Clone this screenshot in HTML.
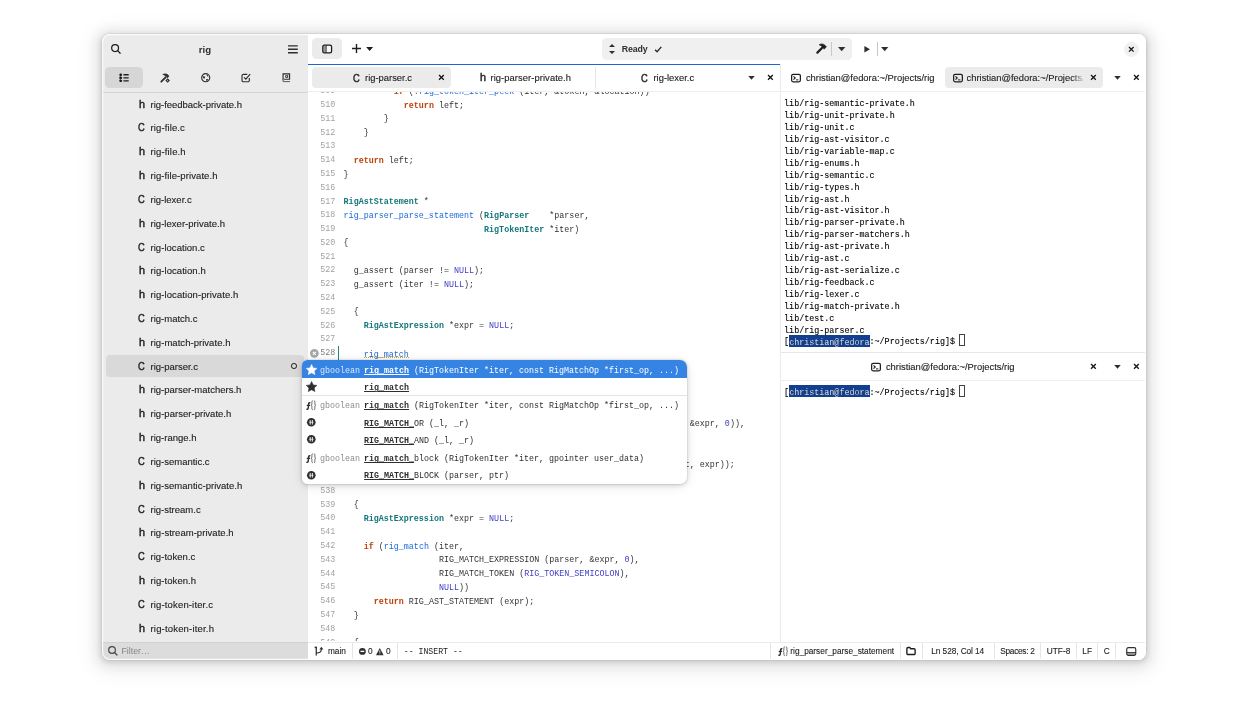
<!DOCTYPE html>
<html lang="en">
<head>
<meta charset="utf-8">
<title>rig - Builder</title>
<style>
html,body{margin:0;padding:0;background:#fff;}
body{width:1248px;height:702px;overflow:hidden;position:relative;font-family:"Liberation Sans",sans-serif;color:#2e2e2e;font-size:9.4px;}
svg{display:block;overflow:visible}
i{font-style:normal}
u{text-decoration:none}
#win{will-change:transform;position:absolute;left:102px;top:34px;width:1044px;height:626px;border-radius:8px;background:#fff;overflow:hidden;
 box-shadow:0 0 0 0.7px rgba(0,0,0,.07),0 1.3px 5px 1.3px rgba(0,0,0,.11),0 2px 13px 6.6px rgba(0,0,0,.08),0 4px 21px 10.6px rgba(0,0,0,.04);}
#win::after{content:"";position:absolute;left:0;top:0;right:0;bottom:0;border-radius:8px;box-shadow:inset 0 0 0 1.2px rgba(255,255,255,.85);pointer-events:none;z-index:50}
.ic{position:absolute}
.ic2{width:10.6px;height:10.6px}
/* sidebar */
#side{position:absolute;left:0;top:0;width:206.9px;height:626px;background:#ebebeb;box-shadow:inset -1px 0 0 #e2e2e2}
#title{position:absolute;left:0;width:206px;top:9.7px;text-align:center;font-weight:bold;font-size:9.6px;line-height:12px;}
#sw{position:absolute;left:3.3px;top:33.2px;width:200.4px;height:21px;display:flex;justify-content:space-between}
.sb{width:37.4px;height:21.2px;border-radius:4.5px;display:flex;align-items:center;justify-content:center}
.sb svg{margin-top:0.6px}
.sb.sel{background:#d6d6d6}
#files{position:absolute;left:0;top:57.6px;width:206.3px;height:549.9px;border-top:1px solid #d4d4d4;overflow:hidden;box-sizing:border-box}
.fr{position:absolute;left:4px;width:198.3px;height:21.6px;border-radius:4px;line-height:21.6px;}
.fr.sel{background:#d9d9d9}
.fr span{position:absolute;left:44.5px;top:0.2px;color:#222;-webkit-text-stroke:0.12px #222;white-space:nowrap;font-size:9.5px}
.fi{position:absolute;font-weight:normal;font-size:10.6px;left:31.5px;top:0.2px;-webkit-text-stroke:0.4px #1e1e1e;color:#1e1e1e;transform-origin:0 50%}
.fc{transform:scaleX(.88)}
.fh{-webkit-text-stroke:0.4px #1e1e1e;font-size:10.2px;transform:scaleX(1.06);margin-left:1px}
.mod{position:absolute;left:185px;top:7.5px;width:3.6px;height:3.6px;border:1.35px solid #161616;border-radius:50%}
#filter{position:absolute;left:0;top:607.5px;width:206.3px;height:18.5px;background:#dcdcdc;box-shadow:inset 0 1px 0 #d2d2d2}
#filter span{position:absolute;left:19.5px;top:0;line-height:19px;color:#868686;font-size:8.8px}
/* header */
#head{position:absolute;left:206.3px;top:0;width:837.7px;height:30px;background:#fff}
.tbtn{position:absolute;left:4px;top:4.3px;width:29.6px;height:21.2px;border-radius:4.5px;background:#ebebeb;display:flex;align-items:center;justify-content:center}
#omni{position:absolute;left:293.9px;top:4.2px;width:250px;height:21.5px;border-radius:4.5px;background:#f0f0f0}
#omni b{position:absolute;left:19.6px;top:1px;line-height:21.5px;font-size:8.8px;letter-spacing:-0.15px}
.vsep{position:absolute;top:3.8px;width:0.8px;height:13.6px;background:#c8c8c8}
#wclose{position:absolute;left:815.8px;top:7.8px;width:14.8px;height:14.8px;border-radius:50%;background:#f0f0f0;display:flex;align-items:center;justify-content:center}
#wclose svg{width:6.6px;height:6.6px}
/* editor */
#ed{position:absolute;left:206.3px;top:30px;width:471.7px;height:577.5px;background:#fff;overflow:hidden}
#focus{position:absolute;left:0;top:-0.1px;width:100%;height:1.4px;background:#1b66d6}
.tabs{position:absolute;left:0;top:0;width:100%;height:57.6px;height:27.6px;top:30px;top:0;border-bottom:1px solid #e6e6e6;margin-top:0}
#ed .tabs,#right .tabs{top:0;height:27.3px;border-bottom-color:#eeeeee}
.tab{position:absolute;top:3.3px;height:20.7px;border-radius:4px;line-height:20.7px;white-space:nowrap}
.tab.sel{background:#ebebeb}
.tab span{position:absolute;top:0.5px;font-size:9.4px;color:#222;-webkit-text-stroke:0.12px #222}
.tab .fi{top:0.4px}
.tab i{position:absolute;top:6.6px;margin-left:0.4px}
.x{width:6.8px;height:6.8px}
.dd{width:7px;height:3.7px;margin-left:0.8px}
.tbi{position:absolute;top:10.2px}
.tbi .dd{margin-top:1.8px}
.tsep{position:absolute;top:3.3px;width:1px;height:21px;background:#e6e6e6}
.ti{position:absolute;top:5.5px;width:10px;height:10px}
.fade{overflow:hidden;-webkit-mask-image:linear-gradient(to right,#000 90%,transparent 102%);mask-image:linear-gradient(to right,#000 90%,transparent 102%)}
#cv{position:absolute;left:0;top:27.8px;width:100%;height:549.7px;overflow:hidden}
#code{position:absolute;left:-2px;top:-5.95px;width:100%;font-family:"Liberation Mono",monospace;font-size:8.37px;line-height:13.79px;color:#333}
#code div{white-space:pre;height:13.79px;padding-left:37.3px;position:relative}
#code u{position:absolute;left:0;top:-0.6px;width:29px;text-align:right;color:#a3a3a3}
#code .cur u{color:#808080}
.dn{position:relative;top:1px}
.k{color:#be4208}
.t{color:#14767a}
.f{color:#1c69d6}
.n{color:#4141c4}
.ul2{position:absolute;left:57.4px;width:45.2px;top:9.2px;border-top:1px dotted #e5a50a}
#caret{position:absolute;left:29.8px;top:282px;width:1px;height:14.3px;background:#1a8a7a}
/* popup */
#pop{position:absolute;left:200.4px;top:326.2px;width:385px;height:124.2px;background:#fff;border-radius:5.5px 7px 7px 5.5px;overflow:hidden;
 box-shadow:0 0 0 0.7px rgba(0,0,0,.06),0 1px 4px rgba(0,0,0,.16),0 2px 12px rgba(0,0,0,.1);font-family:"Liberation Mono",monospace;font-size:8.33px;color:#2e2e2e}
.pr{position:absolute;left:0;width:100%;height:17.6px;line-height:22.2px;white-space:pre}
.psep{position:absolute;left:0;top:35.2px;width:100%;height:1px;background:#e4e4e4}
.pr.sel{background:#3584e4;color:#fff}
.pr em{position:absolute;left:17.7px;font-style:normal;color:#8c8c8c}
.pr.sel em{color:#d6e6fa}
.pr span{position:absolute;left:61.7px}
.pr u{text-decoration:underline;text-decoration-thickness:0.55px;text-underline-offset:1.2px}
.pi{position:absolute;left:4px;top:4.7px;width:10px;height:10px}
.pm{left:4.5px;top:5.2px;width:8.6px;height:8.6px}
.ps{left:3.6px;top:3.8px;width:11.2px;height:11.2px}
/* right */
#right{position:absolute;left:678.3px;top:30px;width:365.7px;height:577.5px;background:#fff;border-left:1px solid #ebebeb;box-sizing:border-box;overflow:hidden}
#right .t2{top:287.8px;border-top:1px solid #e6e6e6}
.term{position:absolute;left:2.8px;margin:0;font-family:"Liberation Mono",monospace;font-size:8.4px;line-height:11.92px;color:#000;-webkit-text-stroke:0.1px #000}
.term div{height:11.92px;white-space:pre}
.hl{background:linear-gradient(#123f90,#123f90) no-repeat 0 0/100% 12.15px;color:#fff;padding:2.9px 0 0}
.tc{position:absolute;width:6.1px;height:12.8px;border:0.9px solid #444;box-sizing:border-box;margin-top:-3.8px;margin-left:-0.9px}
/* status */
#status{position:absolute;left:206.3px;top:607.7px;width:837.7px;height:18.3px;background:#fff;border-top:1px solid #ebebeb;box-sizing:border-box;font-size:8.3px;line-height:17.5px}
#status svg{margin-top:-0.8px}
#status span{position:absolute;top:0;white-space:nowrap;color:#222;-webkit-text-stroke:0.1px #222}
#status .mono{font-family:"Liberation Mono",monospace;font-size:8.2px;margin-top:0.8px;-webkit-text-stroke:0}
.ssep{position:absolute;top:0;width:1px;height:16.6px;background:#e6e6e6}
</style>
</head>
<body>
<div id="win">
<div id="side">
<svg class="ic" style="left:9px;top:9.8px;width:9.8px;height:9.8px" viewBox="0 0 16 16"><circle cx="6.7" cy="6.7" r="5.6" fill="none" stroke="#1a1a1a" stroke-width="2"/><path d="M10.8 10.8L15 15" stroke="#1a1a1a" stroke-width="2.1" stroke-linecap="round"/></svg>
<div id="title">rig</div>
<svg class="ic" style="left:186.1px;top:10.6px;width:9.8px;height:8.6px" viewBox="0 0 16 14"><path d="M0 1.3H16M0 7H16M0 12.7H16" stroke="#2e2e2e" stroke-width="2.2"/></svg>
<div id="sw"><span class="sb sel"><svg style="width:10px;height:9.4px" viewBox="0 0 16 16"><rect x="0.4" y="1" width="4" height="4" rx="1" fill="#1e1e1e"/><rect x="0.4" y="6.2" width="4" height="4" rx="1" fill="#1e1e1e"/><rect x="0.4" y="11.4" width="4" height="4" rx="1" fill="#1e1e1e"/><path d="M1.6 3V13" stroke="#1e1e1e" stroke-width="1.2"/><path d="M7 3H16M7 8.2H16M7 13.4H16" stroke="#1e1e1e" stroke-width="2.3"/></svg></span><span class="sb"><svg style="width:10.4px;height:9.8px" viewBox="0 0 16 16"><path d="M1.6 14.2L8.6 7" stroke="#2e2e2e" stroke-width="2.9" stroke-linecap="round"/><path d="M4 2.4C7.5 0.2 11.8 1.2 14.4 5.2L11.4 8C10 5.6 8 3.8 4 2.4Z" fill="#2e2e2e" stroke="#2e2e2e" stroke-width="0.8" stroke-linejoin="round"/><path d="M12 8.4L15.8 12.2L12 16L8.2 12.2Z" fill="#2e2e2e"/><path d="M12 11.2L13 12.2L12 13.2L11 12.2Z" fill="#ebebeb"/></svg></span><span class="sb"><svg style="width:9.4px;height:9.4px" viewBox="0 0 16 16"><circle cx="8" cy="8" r="6.9" fill="none" stroke="#2e2e2e" stroke-width="1.9"/><path d="M2.4 6.2C4.4 5 6.4 5.4 7 7.2C7.4 8.8 6 9.8 4.6 9.2ZM9.6 2.6C11.2 3 12.6 4.4 12.8 6C11.2 6.6 9.4 5.4 9.6 2.6ZM9 10.4C10.6 9.6 12.2 10.2 12.8 11.6C11.8 13 10 13.6 8.8 13Z" fill="#2e2e2e"/></svg></span><span class="sb"><svg style="width:10.2px;height:9.6px;margin-left:-0.6px" viewBox="0 0 16 16"><path d="M13.4 8.2V12.4A2.2 2.2 0 0 1 11.2 14.6H3.4A2.2 2.2 0 0 1 1.2 12.4V4.6A2.2 2.2 0 0 1 3.4 2.4H10" fill="none" stroke="#2e2e2e" stroke-width="1.9"/><path d="M4.6 7.4L7.6 10.4L14.8 2" fill="none" stroke="#2e2e2e" stroke-width="2"/></svg></span><span class="sb"><svg style="width:8.4px;height:9.3px;margin-left:-2.4px" viewBox="0 0 14 16"><path d="M1.6 13.4V1.4H12.8V10.8H3.4" fill="none" stroke="#2e2e2e" stroke-width="2"/><path d="M1.2 14.8H13.6" stroke="#2e2e2e" stroke-width="1.3"/><path d="M5.4 3.8H10.4V8.2H5.4Z" fill="#2e2e2e"/><path d="M7 4.9L9.2 6L7 7.1Z" fill="#ebebeb"/></svg></span></div>
<div id="files">
<div class="fr" style="top:0.80px"><b class="fi fh">h</b><span style="letter-spacing:-0.02px">rig-feedback-private.h</span></div>
<div class="fr" style="top:24.62px"><b class="fi fc">C</b><span style="letter-spacing:0.12px">rig-file.c</span></div>
<div class="fr" style="top:48.44px"><b class="fi fh">h</b><span style="letter-spacing:0.15px">rig-file.h</span></div>
<div class="fr" style="top:72.26px"><b class="fi fh">h</b><span style="letter-spacing:0.09px">rig-file-private.h</span></div>
<div class="fr" style="top:96.08px"><b class="fi fc">C</b><span>rig-lexer.c</span></div>
<div class="fr" style="top:119.90px"><b class="fi fh">h</b><span style="letter-spacing:0.03px">rig-lexer-private.h</span></div>
<div class="fr" style="top:143.72px"><b class="fi fc">C</b><span style="letter-spacing:0.04px">rig-location.c</span></div>
<div class="fr" style="top:167.54px"><b class="fi fh">h</b><span style="letter-spacing:0.06px">rig-location.h</span></div>
<div class="fr" style="top:191.36px"><b class="fi fh">h</b><span style="letter-spacing:0.08px">rig-location-private.h</span></div>
<div class="fr" style="top:215.18px"><b class="fi fc">C</b><span>rig-match.c</span></div>
<div class="fr" style="top:239.00px"><b class="fi fh">h</b><span style="letter-spacing:0.04px">rig-match-private.h</span></div>
<div class="fr sel" style="top:262.82px"><b class="fi fc">C</b><span>rig-parser.c</span><i class="mod"></i></div>
<div class="fr" style="top:286.64px"><b class="fi fh">h</b><span>rig-parser-matchers.h</span></div>
<div class="fr" style="top:310.46px"><b class="fi fh">h</b><span style="letter-spacing:0.03px">rig-parser-private.h</span></div>
<div class="fr" style="top:334.28px"><b class="fi fh">h</b><span>rig-range.h</span></div>
<div class="fr" style="top:358.10px"><b class="fi fc">C</b><span>rig-semantic.c</span></div>
<div class="fr" style="top:381.92px"><b class="fi fh">h</b><span style="letter-spacing:0.02px">rig-semantic-private.h</span></div>
<div class="fr" style="top:405.74px"><b class="fi fc">C</b><span>rig-stream.c</span></div>
<div class="fr" style="top:429.56px"><b class="fi fh">h</b><span style="letter-spacing:0.04px">rig-stream-private.h</span></div>
<div class="fr" style="top:453.38px"><b class="fi fc">C</b><span style="letter-spacing:0.05px">rig-token.c</span></div>
<div class="fr" style="top:477.20px"><b class="fi fh">h</b><span style="letter-spacing:0.07px">rig-token.h</span></div>
<div class="fr" style="top:501.02px"><b class="fi fc">C</b><span style="letter-spacing:0.15px">rig-token-iter.c</span></div>
<div class="fr" style="top:524.84px"><b class="fi fh">h</b><span style="letter-spacing:0.18px">rig-token-iter.h</span></div>
</div>
<div id="filter"><svg class="ic" style="left:6.1px;top:4.4px;width:9.6px;height:9.6px;opacity:.78" viewBox="0 0 16 16"><circle cx="6.7" cy="6.7" r="5.6" fill="none" stroke="#1a1a1a" stroke-width="1.9"/><path d="M10.8 10.8L15 15" stroke="#1a1a1a" stroke-width="2" stroke-linecap="round"/></svg><span>Filter…</span></div>
</div>
<div id="head">
<span class="tbtn"><svg style="width:10.4px;height:10.2px;margin-top:-0.3px" viewBox="0 0 16 16"><rect x="1.1" y="1.9" width="13.8" height="12.2" rx="2.6" fill="#fff" fill-opacity=".55"/><path d="M2 3H6.2V13H2Z" fill="#9c9c9c"/><rect x="1.1" y="1.9" width="13.8" height="12.2" rx="2.6" fill="none" stroke="#1a1a1a" stroke-width="2"/><path d="M6.4 2.4V13.6" stroke="#1a1a1a" stroke-width="1.2"/></svg></span>
<svg class="ic" style="left:44px;top:10.3px;width:9px;height:9px" viewBox="0 0 9 9"><path d="M4.5 0V9M0 4.5H9" stroke="#1e1e1e" stroke-width="1.4" fill="none"/></svg>
<svg class="ic" style="left:57.5px;top:12.8px;width:7.3px;height:4px" viewBox="0 0 7 4"><path d="M0 0H7L3.5 4Z" fill="#1e1e1e"/></svg>
<div id="omni"><svg class="ic" style="left:6.6px;top:5.8px;width:6px;height:10px" viewBox="0 0 6 10"><path d="M0 2.9L3 0L6 2.9ZM0 7.1L3 10L6 7.1Z" fill="#2e2e2e"/></svg><b>Ready</b><svg class="ic" style="left:51.8px;top:7.5px;width:8.4px;height:6.8px" viewBox="0 0 9 8"><path d="M0.8 4.4L3.2 6.8L8.2 1" stroke="#2e2e2e" stroke-width="1.7" fill="none"/></svg><svg class="ic" style="left:213.4px;top:4.6px;width:11px;height:11px" viewBox="0 0 16 16"><path d="M2 14L9.4 6.6" stroke="#1e1e1e" stroke-width="3.1" stroke-linecap="round"/><path d="M4.4 2.6C7.8 0.2 12.2 1 15.2 5.6L11.8 9C10.4 6 8 4 4.4 2.6Z" fill="#1e1e1e" stroke="#1e1e1e" stroke-width="0.8" stroke-linejoin="round"/></svg><i class="vsep" style="left:228.8px"></i><svg class="ic" style="left:235.8px;top:8.6px;width:7.4px;height:4.2px" viewBox="0 0 7 4"><path d="M0 0H7L3.5 4Z" fill="#2e2e2e"/></svg></div>
<svg class="ic" style="left:555.8px;top:11.8px;width:6.3px;height:6.4px" viewBox="0 0 7 8"><path d="M0 0L7 4L0 8Z" fill="#2e2e2e"/></svg>
<i class="vsep" style="left:568.6px;top:8px"></i>
<svg class="ic" style="left:572.6px;top:12.8px;width:7.4px;height:4.2px" viewBox="0 0 7 4"><path d="M0 0H7L3.5 4Z" fill="#2e2e2e"/></svg>
<span id="wclose"><svg viewBox="0 0 8 8"><path d="M1.2 1.2L6.8 6.8M6.8 1.2L1.2 6.8" stroke="#161616" stroke-width="1.6" fill="none"/></svg></span>
</div>
<div id="ed">
<div id="focus"></div>
<div class="tabs">
<div class="tab sel" style="left:3.9px;width:138.4px"><b class="fi fc" style="left:40.4px">C</b><span style="left:52.9px">rig-parser.c</span><i style="left:125px"><svg class="x" viewBox="0 0 8 8"><path d="M1.2 1.2L6.8 6.8M6.8 1.2L1.2 6.8" stroke="#161616" stroke-width="1.6" fill="none"/></svg></i></div>
<div class="tab" style="left:145px;width:141px"><b class="fi fh" style="left:26px">h</b><span style="left:37.2px;letter-spacing:0.07px">rig-parser-private.h</span></div>
<i class="tsep" style="left:287px"></i>
<div class="tab" style="left:290px;width:141px"><b class="fi fc" style="left:42.8px">C</b><span style="left:55.2px">rig-lexer.c</span></div>
<i class="tbi" style="left:439.3px"><svg class="dd" viewBox="0 0 7 4"><path d="M0 0H7L3.5 4Z" fill="#2e2e2e"/></svg></i><i class="tbi" style="left:459px"><svg class="x" viewBox="0 0 8 8"><path d="M1.2 1.2L6.8 6.8M6.8 1.2L1.2 6.8" stroke="#161616" stroke-width="1.6" fill="none"/></svg></i>
</div>
<div id="cv"><div id="code">
<div><u>509</u>          <b class="k">if</b> (!<span class="f">rig_token_iter_peek</span> (iter, &amp;token, &amp;location))</div>
<div><u>510</u>            <b class="k">return</b> left;</div>
<div><u>511</u>        }</div>
<div><u>512</u>    }</div>
<div><u>513</u></div>
<div><u>514</u>  <b class="k">return</b> left;</div>
<div><u>515</u>}</div>
<div><u>516</u></div>
<div><u>517</u><b class="t">RigAstStatement</b> *</div>
<div><u>518</u><span class="f">rig_parser_parse_statement</span> (<b class="t">RigParser</b>    *parser,</div>
<div><u>519</u>                            <b class="t">RigTokenIter</b> *iter)</div>
<div><u>520</u>{</div>
<div><u>521</u></div>
<div><u>522</u>  g_assert (parser != <span class="n">NULL</span>);</div>
<div><u>523</u>  g_assert (iter != <span class="n">NULL</span>);</div>
<div><u>524</u></div>
<div><u>525</u>  {</div>
<div><u>526</u>    <b class="t">RigAstExpression</b> *expr = <span class="n">NULL</span>;</div>
<div><u>527</u></div>
<div class="cur"><u>528</u>    <span class="f dn">rig_match</span><i class="ul2"></i></div>
<div><u>529</u></div>
<div><u>530</u></div>
<div><u>531</u></div>
<div><u>532</u></div>
<div><u>533</u>                                                                     <span class="dn">&amp;expr, <span class="n">0</span>)),</span></div>
<div><u>534</u></div>
<div><u>535</u></div>
<div><u>536</u>                                                                    <span class="dn">t, expr));</span></div>
<div><u>537</u></div>
<div><u>538</u></div>
<div><u>539</u>  {</div>
<div><u>540</u>    <b class="t">RigAstExpression</b> *expr = <span class="n">NULL</span>;</div>
<div><u>541</u></div>
<div><u>542</u>    <b class="k">if</b> (<span class="f">rig_match</span> (iter,</div>
<div><u>543</u>                   RIG_MATCH_EXPRESSION (parser, &amp;expr, <span class="n">0</span>),</div>
<div><u>544</u>                   RIG_MATCH_TOKEN (<span class="n">RIG_TOKEN_SEMICOLON</span>),</div>
<div><u>545</u>                   <span class="n">NULL</span>))</div>
<div><u>546</u>      <b class="k">return</b> RIG_AST_STATEMENT (expr);</div>
<div><u>547</u>  }</div>
<div><u>548</u></div>
<div><u>549</u>  {</div>
</div></div>
<svg class="ic" style="left:2.1px;top:284.6px;width:8.7px;height:8.7px" viewBox="0 0 16 16"><circle cx="8" cy="8" r="8" fill="#a6a6a6"/><path d="M5.2 5.2L10.8 10.8M10.8 5.2L5.2 10.8" stroke="#fff" stroke-width="2" fill="none"/></svg>
<i id="caret"></i>
</div>
<div id="pop">
<i class="psep"></i>
<div class="pr sel" style="top:0.0px"><svg class="pi ps" viewBox="0 0 16 16"><path d="M8 0.8L10.3 5.6L15.6 6.3L11.7 9.9L12.7 15.1L8 12.5L3.3 15.1L4.3 9.9L0.4 6.3L5.7 5.6Z" fill="currentColor" stroke="currentColor" stroke-width="0.8" stroke-linejoin="round"/></svg><em>gboolean</em><span><b><u>rig_match</u></b> (RigTokenIter *iter, const RigMatchOp *first_op, ...)</span></div>
<div class="pr" style="top:17.0px"><svg class="pi ps" viewBox="0 0 16 16"><path d="M8 0.8L10.3 5.6L15.6 6.3L11.7 9.9L12.7 15.1L8 12.5L3.3 15.1L4.3 9.9L0.4 6.3L5.7 5.6Z" fill="currentColor" stroke="currentColor" stroke-width="0.8" stroke-linejoin="round"/></svg><em></em><span><b><u>rig_match</u></b></span></div>
<div class="pr" style="top:35.0px"><svg class="pi" viewBox="0 0 16 16"><path d="M6.8 4.8C5.2 4.1 4.3 4.8 4.2 6.2L3.6 12.8C3.5 14.4 2.4 15.2 0.6 14.6" fill="none" stroke="currentColor" stroke-width="2.3"/><path d="M1.2 8.6H6.6" stroke="currentColor" stroke-width="2"/><path d="M11 1.4C9.6 1.4 9.4 2 9.4 3V6.6C9.4 7.6 9 8.2 8.2 8.4C9 8.6 9.4 9.2 9.4 10.2V13.8C9.4 14.8 9.6 15.4 11 15.4M12.6 1.4C14 1.4 14.2 2 14.2 3V6.6C14.2 7.6 14.6 8.2 15.4 8.4C14.6 8.6 14.2 9.2 14.2 10.2V13.8C14.2 14.8 14 15.4 12.6 15.4" fill="none" stroke="currentColor" stroke-width="1.1"/></svg><em>gboolean</em><span><b><u>rig_match</u></b> (RigTokenIter *iter, const RigMatchOp *first_op, ...)</span></div>
<div class="pr" style="top:52.8px"><svg class="pi pm" viewBox="0 0 16 16"><circle cx="8" cy="8" r="8" fill="currentColor"/><path d="M6 3.8V12.2M10 3.8V12.2" stroke="#fff" stroke-width="1.7"/><path d="M3.6 8H12.4" stroke="#fff" stroke-width="1.1"/></svg><em></em><span><b><u>RIG_MATCH_</u></b>OR (_l, _r)</span></div>
<div class="pr" style="top:69.6px"><svg class="pi pm" viewBox="0 0 16 16"><circle cx="8" cy="8" r="8" fill="currentColor"/><path d="M6 3.8V12.2M10 3.8V12.2" stroke="#fff" stroke-width="1.7"/><path d="M3.6 8H12.4" stroke="#fff" stroke-width="1.1"/></svg><em></em><span><b><u>RIG_MATCH_</u></b>AND (_l, _r)</span></div>
<div class="pr" style="top:88.3px"><svg class="pi" viewBox="0 0 16 16"><path d="M6.8 4.8C5.2 4.1 4.3 4.8 4.2 6.2L3.6 12.8C3.5 14.4 2.4 15.2 0.6 14.6" fill="none" stroke="currentColor" stroke-width="2.3"/><path d="M1.2 8.6H6.6" stroke="currentColor" stroke-width="2"/><path d="M11 1.4C9.6 1.4 9.4 2 9.4 3V6.6C9.4 7.6 9 8.2 8.2 8.4C9 8.6 9.4 9.2 9.4 10.2V13.8C9.4 14.8 9.6 15.4 11 15.4M12.6 1.4C14 1.4 14.2 2 14.2 3V6.6C14.2 7.6 14.6 8.2 15.4 8.4C14.6 8.6 14.2 9.2 14.2 10.2V13.8C14.2 14.8 14 15.4 12.6 15.4" fill="none" stroke="currentColor" stroke-width="1.1"/></svg><em>gboolean</em><span><b><u>rig_match_</u></b>block (RigTokenIter *iter, gpointer user_data)</span></div>
<div class="pr" style="top:105.2px"><svg class="pi pm" viewBox="0 0 16 16"><circle cx="8" cy="8" r="8" fill="currentColor"/><path d="M6 3.8V12.2M10 3.8V12.2" stroke="#fff" stroke-width="1.7"/><path d="M3.6 8H12.4" stroke="#fff" stroke-width="1.1"/></svg><em></em><span><b><u>RIG_MATCH_</u></b>BLOCK (parser, ptr)</span></div>
</div>
<div id="right">
<div class="tabs">
<div class="tab" style="left:3px;width:158px"><svg class="ti" style="left:7.2px" viewBox="0 0 16 16"><rect x="1" y="2" width="14" height="12" rx="2.4" fill="none" stroke="#1e1e1e" stroke-width="2"/><path d="M4 5.4L6.8 8L4 10.6" fill="none" stroke="#1e1e1e" stroke-width="1.8"/><path d="M8 11H11.8" stroke="#1e1e1e" stroke-width="1.6"/></svg><span style="left:21.6px">christian@fedora:~/Projects/rig</span></div>
<div class="tab sel" style="left:163.6px;width:158.4px"><svg class="ti" style="left:7.7px" viewBox="0 0 16 16"><rect x="1" y="2" width="14" height="12" rx="2.4" fill="none" stroke="#1e1e1e" stroke-width="2"/><path d="M4 5.4L6.8 8L4 10.6" fill="none" stroke="#1e1e1e" stroke-width="1.8"/><path d="M8 11H11.8" stroke="#1e1e1e" stroke-width="1.6"/></svg><span class="fade" style="left:21.7px;width:116.5px">christian@fedora:~/Projects/rig</span><i style="left:144.9px"><svg class="x" viewBox="0 0 8 8"><path d="M1.2 1.2L6.8 6.8M6.8 1.2L1.2 6.8" stroke="#161616" stroke-width="1.6" fill="none"/></svg></i></div>
<i class="tbi" style="left:332px"><svg class="dd" viewBox="0 0 7 4"><path d="M0 0H7L3.5 4Z" fill="#2e2e2e"/></svg></i><i class="tbi" style="left:351.8px"><svg class="x" viewBox="0 0 8 8"><path d="M1.2 1.2L6.8 6.8M6.8 1.2L1.2 6.8" stroke="#161616" stroke-width="1.6" fill="none"/></svg></i>
</div>
<div class="term" style="top:35.3px">
<div>lib/rig-semantic-private.h</div>
<div>lib/rig-unit-private.h</div>
<div>lib/rig-unit.c</div>
<div>lib/rig-ast-visitor.c</div>
<div>lib/rig-variable-map.c</div>
<div>lib/rig-enums.h</div>
<div>lib/rig-semantic.c</div>
<div>lib/rig-types.h</div>
<div>lib/rig-ast.h</div>
<div>lib/rig-ast-visitor.h</div>
<div>lib/rig-parser-private.h</div>
<div>lib/rig-parser-matchers.h</div>
<div>lib/rig-ast-private.h</div>
<div>lib/rig-ast.c</div>
<div>lib/rig-ast-serialize.c</div>
<div>lib/rig-feedback.c</div>
<div>lib/rig-lexer.c</div>
<div>lib/rig-match-private.h</div>
<div>lib/test.c</div>
<div>lib/rig-parser.c</div>
<div>[<span class="hl">christian@fedora</span>:~/Projects/rig]$ <i class="tc"></i></div>
</div>
<div class="tabs t2">
<div class="tab" style="left:3px;width:320px"><svg class="ti" style="left:87.2px" viewBox="0 0 16 16"><rect x="1" y="2" width="14" height="12" rx="2.4" fill="none" stroke="#1e1e1e" stroke-width="2"/><path d="M4 5.4L6.8 8L4 10.6" fill="none" stroke="#1e1e1e" stroke-width="1.8"/><path d="M8 11H11.8" stroke="#1e1e1e" stroke-width="1.6"/></svg><span style="left:101.6px">christian@fedora:~/Projects/rig</span><i style="left:305.5px"><svg class="x" viewBox="0 0 8 8"><path d="M1.2 1.2L6.8 6.8M6.8 1.2L1.2 6.8" stroke="#161616" stroke-width="1.6" fill="none"/></svg></i></div>
<i class="tbi" style="left:332px"><svg class="dd" viewBox="0 0 7 4"><path d="M0 0H7L3.5 4Z" fill="#2e2e2e"/></svg></i><i class="tbi" style="left:351.8px"><svg class="x" viewBox="0 0 8 8"><path d="M1.2 1.2L6.8 6.8M6.8 1.2L1.2 6.8" stroke="#161616" stroke-width="1.6" fill="none"/></svg></i>
</div>
<div class="term" style="top:324.3px"><div>[<span class="hl">christian@fedora</span>:~/Projects/rig]$ <i class="tc"></i></div></div>
</div>
<div id="status">
<svg class="ic" style="left:6px;top:4.5px;width:10px;height:10px" viewBox="0 0 16 16"><path d="M3.6 2V15" fill="none" stroke="#2e2e2e" stroke-width="2"/><path d="M3.6 11.2C9.5 11.2 11.8 9.6 11.8 5" fill="none" stroke="#2e2e2e" stroke-width="1.9"/><path d="M8.6 5.6L11.8 1L15 5.6Z" fill="#2e2e2e"/><path d="M1 1H4.6V3.4H1Z" fill="#2e2e2e"/></svg><span style="left:19.6px">main</span>
<i class="ssep" style="left:43.6px"></i>
<svg class="ic" style="left:50.9px;top:6.4px;width:6.8px;height:6.8px" viewBox="0 0 16 16"><circle cx="8" cy="8" r="8" fill="#2e2e2e"/><rect x="3.5" y="6.4" width="9" height="3.2" fill="#fff"/></svg><span style="left:59.6px">0</span>
<svg class="ic" style="left:68px;top:6.1px;width:7.6px;height:7.2px" viewBox="0 0 16 15"><path d="M8 0L16 15H0Z" fill="#2e2e2e"/><path d="M8 5V10M8 11.5V13.2" stroke="#fff" stroke-width="1.8"/></svg><span style="left:77.8px">0</span>
<i class="ssep" style="left:88.5px"></i>
<span class="mono" style="left:95.5px">-- INSERT --</span>
<i class="ssep" style="left:461.8px"></i>
<svg class="ic" style="left:469.5px;top:4.5px;width:10px;height:10px" viewBox="0 0 16 16"><path d="M6.8 4.8C5.2 4.1 4.3 4.8 4.2 6.2L3.6 12.8C3.5 14.4 2.4 15.2 0.6 14.6" fill="none" stroke="currentColor" stroke-width="2.3"/><path d="M1.2 8.6H6.6" stroke="currentColor" stroke-width="2"/><path d="M11 1.4C9.6 1.4 9.4 2 9.4 3V6.6C9.4 7.6 9 8.2 8.2 8.4C9 8.6 9.4 9.2 9.4 10.2V13.8C9.4 14.8 9.6 15.4 11 15.4M12.6 1.4C14 1.4 14.2 2 14.2 3V6.6C14.2 7.6 14.6 8.2 15.4 8.4C14.6 8.6 14.2 9.2 14.2 10.2V13.8C14.2 14.8 14 15.4 12.6 15.4" fill="none" stroke="currentColor" stroke-width="1.1"/></svg><span style="left:482px">rig_parser_parse_statement</span>
<i class="ssep" style="left:591.5px"></i>
<svg class="ic" style="left:598px;top:4.5px;width:10px;height:10px" viewBox="0 0 16 16"><path d="M1.4 4.2A1.8 1.8 0 0 1 3.2 2.4H6L7.6 4.4H12.8A1.8 1.8 0 0 1 14.6 6.2V11.8A1.8 1.8 0 0 1 12.8 13.6H3.2A1.8 1.8 0 0 1 1.4 11.8Z" fill="none" stroke="#1e1e1e" stroke-width="2.2"/></svg>
<i class="ssep" style="left:614px"></i>
<span style="left:623px;letter-spacing:-0.08px">Ln 528, Col 14</span>
<i class="ssep" style="left:686px"></i>
<span style="left:692px;letter-spacing:-0.3px">Spaces: 2</span>
<i class="ssep" style="left:731.5px"></i>
<span style="left:738.5px">UTF-8</span>
<i class="ssep" style="left:768px"></i>
<span style="left:774px">LF</span>
<i class="ssep" style="left:788.8px"></i>
<span style="left:795.5px">C</span>
<i class="ssep" style="left:806.8px"></i>
<svg class="ic" style="left:817.5px;top:5px;width:10.5px;height:9px" viewBox="0 0 16 14"><rect x="1" y="1" width="14" height="12" rx="2.4" fill="none" stroke="#2e2e2e" stroke-width="1.8"/><path d="M1.6 8.6H14.4V11.4A1.6 1.6 0 0 1 12.8 13H3.2A1.6 1.6 0 0 1 1.6 11.4Z" fill="#2e2e2e" fill-opacity=".45"/><path d="M1 8.6H15" stroke="#2e2e2e" stroke-width="1.4"/></svg>
</div>
</div>
</body>
</html>
